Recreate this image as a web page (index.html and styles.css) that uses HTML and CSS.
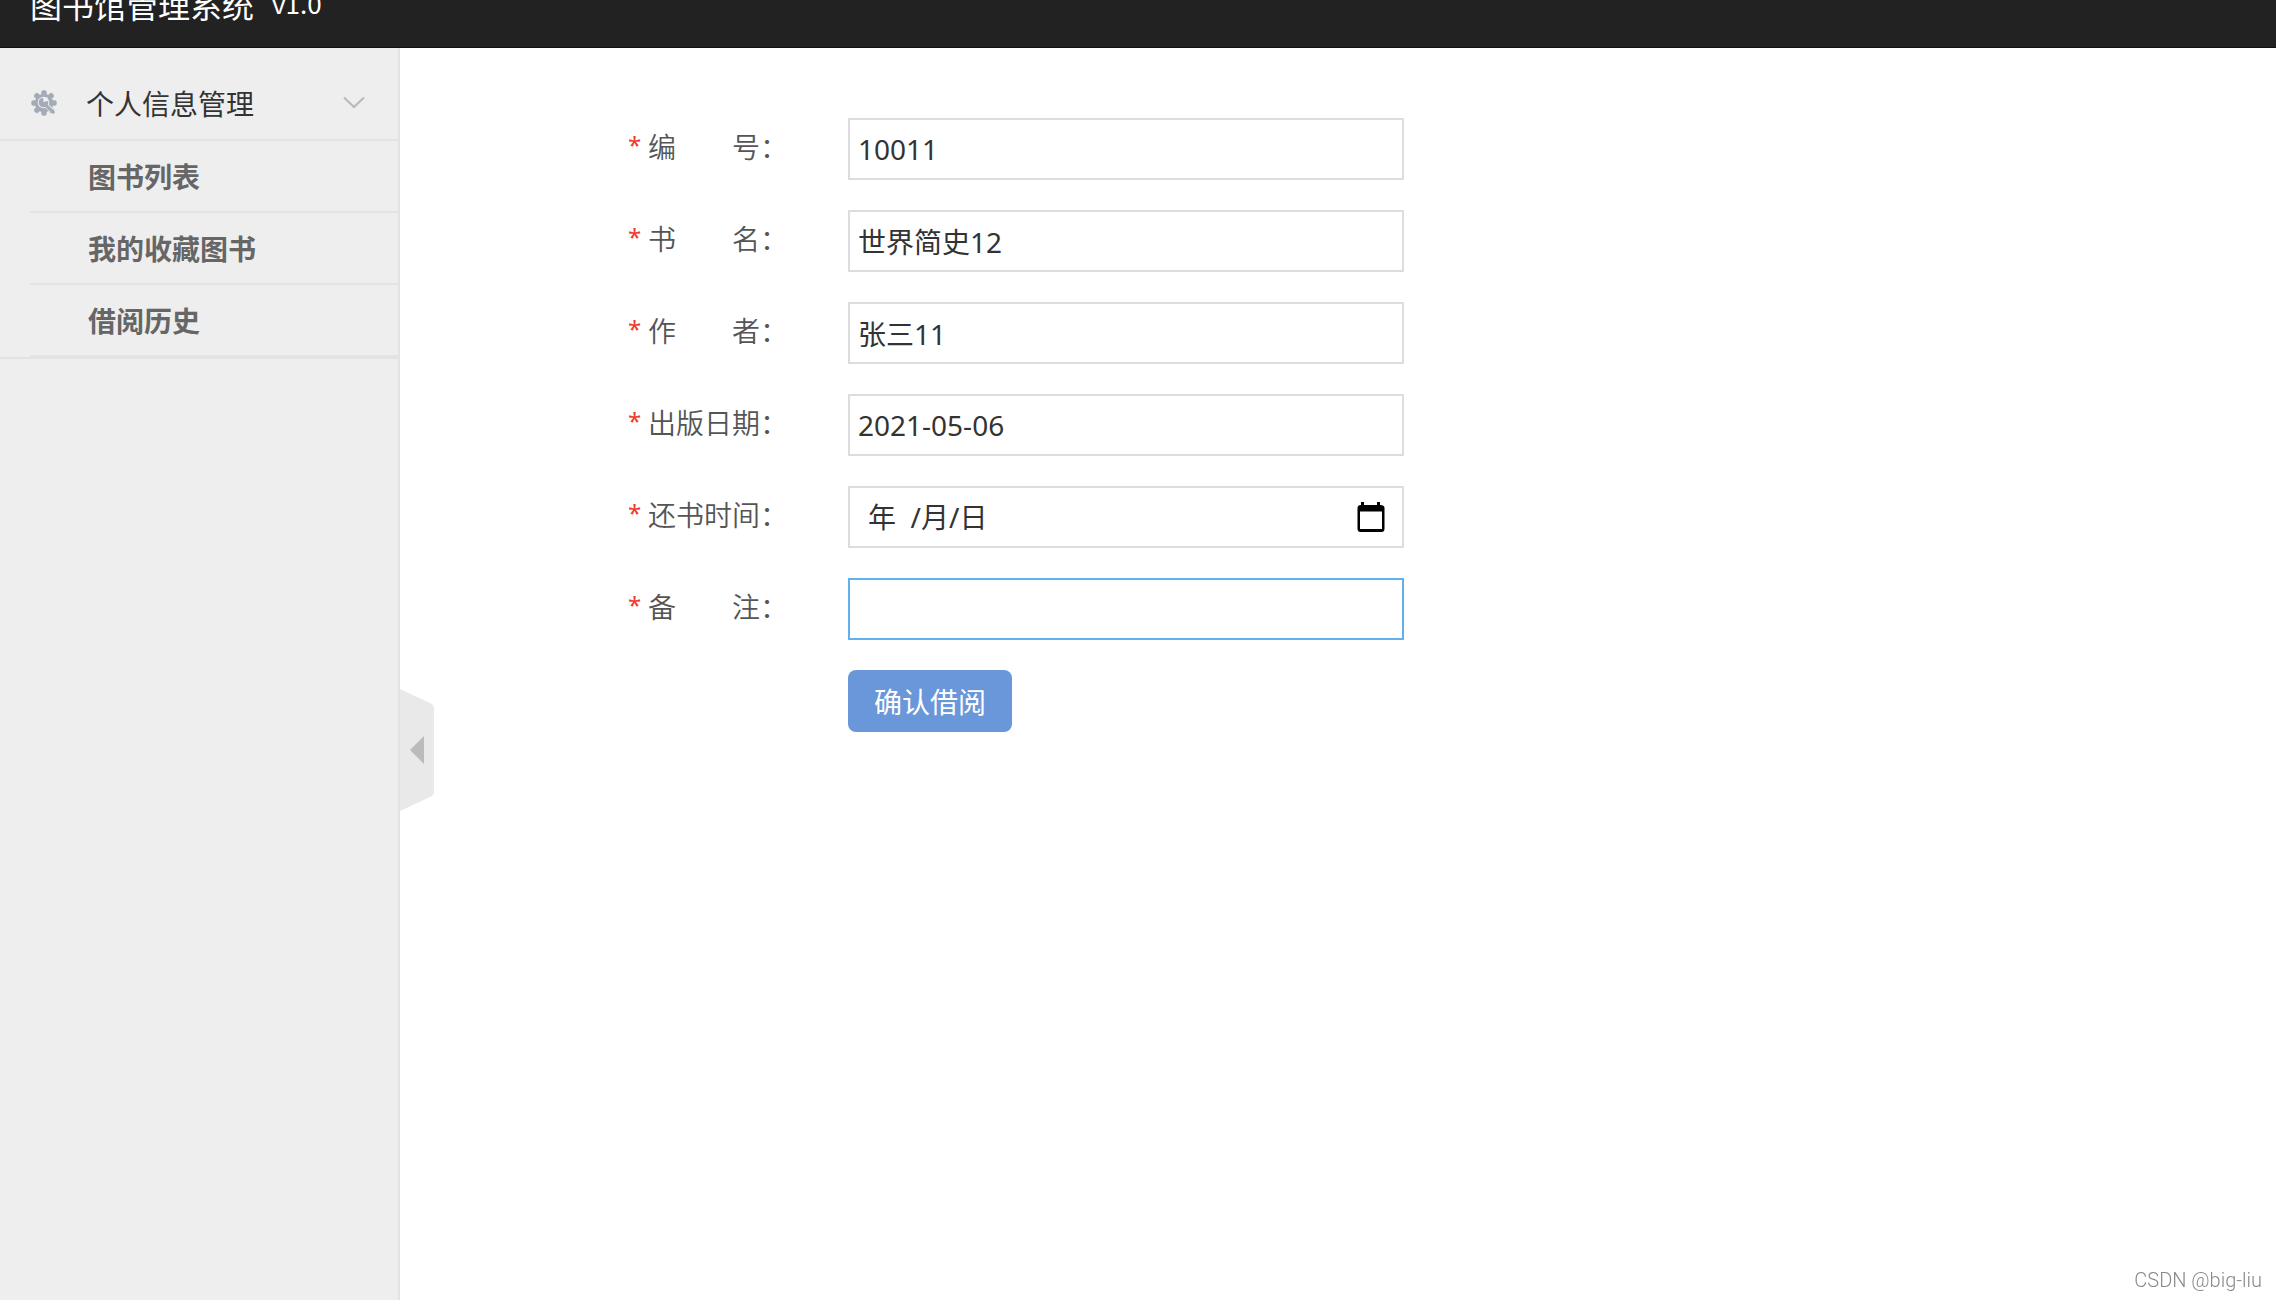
FILE: index.html
```html
<!DOCTYPE html>
<html lang="zh-CN">
<head>
<meta charset="utf-8">
<title>图书馆管理系统</title>
<link rel="stylesheet" href="styles.css">
</head>
<body>
<header class="topbar">
  <span class="brand">图书馆管理系统</span>
  <span class="version">v1.0</span>
</header>
<div class="layout">
  <aside class="sidebar">
    <nav class="menu">
      <button class="menu-head" type="button">
        <svg class="cog" viewBox="0 0 26 26" aria-hidden="true">
          <g fill="#a3abb7">
            <circle cx="13" cy="13" r="9.2"/>
            <rect x="10.300" y="0.300" width="5.400" height="25.400" rx="2"/>
            <rect x="10.300" y="0.300" width="5.400" height="25.400" rx="2" transform="rotate(45 13 13)"/>
            <rect x="10.300" y="0.300" width="5.400" height="25.400" rx="2" transform="rotate(90 13 13)"/>
            <rect x="10.300" y="0.300" width="5.400" height="25.400" rx="2" transform="rotate(135 13 13)"/>
          </g>
          <circle cx="12.500" cy="12.500" r="5.800" fill="#eee"/>
          <path d="M14 14L21 21" stroke="#eee" stroke-width="4.600"/>
          <circle cx="12.500" cy="12.500" r="4.800" fill="#a3abb7"/>
          <path d="M12.500 12L12 7L16.500 7.500L17 11Z" fill="#eee"/>
          <path d="M13.500 14L22.200 22.200" stroke="#a3abb7" stroke-width="3.200" stroke-linecap="round"/>
        </svg>
        <span class="menu-title">个人信息管理</span>
        <svg class="chevron" viewBox="0 0 22 13" aria-hidden="true"><path d="M1 1.5L11 11L21 1.5" fill="none" stroke="#b8b8b8" stroke-width="2"/></svg>
      </button>
      <ul class="submenu">
        <li><a href="#books">图书列表</a></li>
        <li><a href="#favorites">我的收藏图书</a></li>
        <li><a href="#history">借阅历史</a></li>
      </ul>
    </nav>
    <button class="collapse" type="button" aria-label="收起菜单">
      <svg viewBox="0 0 34 122" aria-hidden="true"><path d="M0 0L30 14Q34 16 34 19V103Q34 106 30 108L0 122Z" fill="#e9e9e9"/><path d="M10 61L24 47V75Z" fill="#bbb"/></svg>
    </button>
  </aside>
  <main class="content">
    <form class="form">
      <div class="row">
        <label for="no"><span class="star">*</span>编　　号：</label>
        <input class="field" id="no" type="text" value="10011">
      </div>
      <div class="row">
        <label for="name"><span class="star">*</span>书　　名：</label>
        <input class="field" id="name" type="text" value="世界简史12">
      </div>
      <div class="row">
        <label for="author"><span class="star">*</span>作　　者：</label>
        <input class="field" id="author" type="text" value="张三11">
      </div>
      <div class="row">
        <label for="published"><span class="star">*</span>出版日期：</label>
        <input class="field" id="published" type="text" value="2021-05-06">
      </div>
      <div class="row">
        <label for="due"><span class="star">*</span>还书时间：</label>
        <div class="field date">
          <input id="due" type="text" placeholder="年&nbsp;&nbsp;/月/日">
          <button class="picker" type="button" aria-label="选择日期">
            <svg viewBox="0 0 28 30" aria-hidden="true"><path d="M4 0H7V3H20V0H23V3Q27.500 3 27.500 6V26.500Q27.500 30 24.500 30H3.500Q.5 30 .5 26.500V6Q.5 3 4 3ZM3 9.500V27H25V9.500Z" fill="#000" fill-rule="evenodd"/></svg>
          </button>
        </div>
      </div>
      <div class="row">
        <label for="note"><span class="star">*</span>备　　注：</label>
        <input class="field active" id="note" type="text">
      </div>
      <button class="submit" type="submit">确认借阅</button>
    </form>
  </main>
</div>
<div class="credit">CSDN @big-liu</div>
</body>
</html>
```
FILE: styles.css
```css
* { box-sizing: border-box; }

body {
  display: flex;
  flex-direction: column;
  min-height: 100vh;
  margin: 0;
  background: #fff;
  color: #333;
  font: 28px/40px "Noto Sans", "Noto Sans CJK SC", sans-serif;
}

button, input { font: inherit; color: inherit; }
button { padding: 0; border: 0; background: none; cursor: pointer; }

.topbar {
  display: flex;
  align-items: flex-start;
  gap: 18px;
  height: 48px;
  padding: 0 30px;
  overflow: hidden;
  border-bottom: 1px solid #111;
  background: #222;
  color: #fff;
  font-family: "Noto Sans CJK SC", sans-serif;
}
.brand { margin-top: -20px; font-size: 32px; line-height: 48px; }
.version { margin-top: -20px; font-size: 26px; line-height: 46px; }

.layout { display: flex; flex: 1; }

.sidebar {
  position: relative;
  flex: 0 0 400px;
  border-right: 2px solid #e3e3e3;
  background: #eee;
  font-family: "Noto Sans CJK SC", sans-serif;
}
.menu { border-bottom: 2px solid #e3e3e3; }
.menu-head {
  display: flex;
  align-items: center;
  width: 100%;
  height: 93px;
  padding: 18px 33px 0 30px;
  border-bottom: 2px solid #e3e3e3;
  text-align: left;
}
.cog { width: 28px; height: 26px; }
.menu-title { flex: 1; margin-left: 28px; }
.chevron { width: 22px; height: 13px; }

.submenu { margin: 0; padding: 0 0 0 30px; list-style: none; }
.submenu a {
  display: block;
  padding-left: 58px;
  border-bottom: 2px solid #e3e3e3;
  color: #666;
  font-weight: 700;
  line-height: 70px;
  text-decoration: none;
}

.collapse {
  position: absolute;
  top: 641px;
  left: 100%;
  width: 36px;
  height: 122px;
  padding-left: 2px;
}
.collapse svg { display: block; width: 34px; height: 122px; }

.content { flex: 1; padding: 70px 40px 40px 228px; }
.form { display: flex; flex-direction: column; gap: 30px; }
.row { display: flex; }
.row label { display: flex; width: 220px; color: #555; font-weight: 350; line-height: 58px; }
.star { width: 20px; color: #f03a2e; font-size: 24px; font-weight: 400; line-height: 54px; }

.field {
  width: 556px;
  height: 62px;
  padding: 0 8px;
  border: 2px solid #ddd;
  border-radius: 0;
  outline: 0;
  background: #fff;
}
.field.active { border-color: #62b1ec; }

.date { display: flex; align-items: center; padding: 0 17px 0 18px; }
.date input { flex: 1; min-width: 0; padding: 0; border: 0; outline: 0; }
.date input::placeholder { color: #333; opacity: 1; }
.picker { width: 28px; height: 30px; }
.picker svg { display: block; width: 28px; height: 30px; }

.submit {
  width: 164px;
  height: 62px;
  margin-left: 220px;
  padding-top: 2px;
  border-radius: 8px;
  background: #6a96da;
  color: #fff;
}

.credit {
  position: fixed;
  right: 14px;
  bottom: 8px;
  color: #888;
  font: 300 20px/24px Roboto, sans-serif;
}
```
